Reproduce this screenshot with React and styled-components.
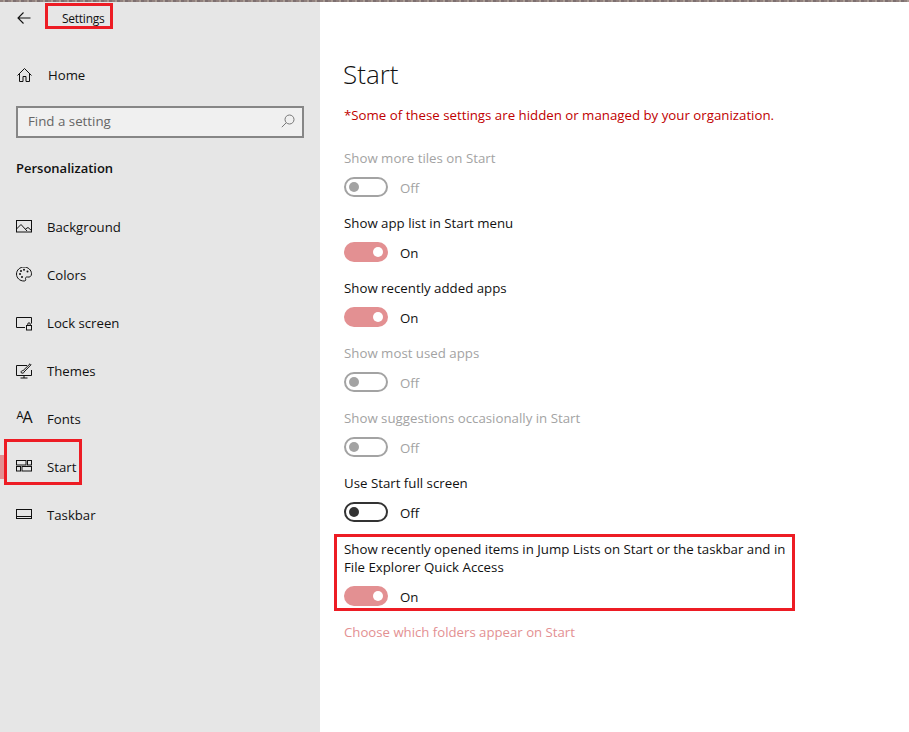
import React from "react";
import styled, { createGlobalStyle } from "styled-components";

const Global = createGlobalStyle`
  html, body { margin: 0; padding: 0; background: #fff; }
  body { font-family: "Open Sans", "Noto Sans", "Liberation Sans", sans-serif; color: #111; }
  * { box-sizing: border-box; }
`;

const Page = styled.div`
  position: relative;
  width: 909px;
  height: 732px;
  overflow: hidden;
  display: flex;
  background: #fff;
`;
const TopStrip = styled.div`
  position: absolute;
  top: 0; left: 0; right: 0;
  height: 2px;
  background: repeating-linear-gradient(90deg, #8f7f7c 0 3px, #a89a92 3px 5px, #7d6f70 5px 8px);
`;
const Sidebar = styled.aside`
  width: 320px;
  flex: none;
  background: #e6e6e6;
  display: flex;
  flex-direction: column;
  padding-top: 7px;
`;
const TitleBar = styled.div`
  display: flex;
  align-items: center;
  height: 22px;
  padding-left: 17px;
`;
const BackIcon = styled.svg`
  width: 14px;
  height: 14px;
  fill: none;
  stroke: #111;
  stroke-width: 1.1;
`;
const AppTitle = styled.div`
  align-self: flex-start;
  margin: -4px 0 0 14px;
  width: 68px;
  height: 26px;
  border: 3px solid #ed1c24;
  padding-left: 14px;
  font-size: 12px;
  line-height: 25px;
  letter-spacing: -0.25px;
  white-space: nowrap;
`;
const NavRow = styled.div`
  position: relative;
  display: flex;
  align-items: center;
  height: 48px;
  padding-left: 16px;
  gap: 15px;
  font-size: 13.2px;
`;
const HomeRow = styled(NavRow)`
  margin-top: 22px;
  gap: 16px;
`;
const NavIcon = styled.svg`
  width: 16px;
  height: 16px;
  flex: none;
  fill: none;
  stroke: #111;
  stroke-width: 1;
`;
const ActiveMark = styled.span`
  position: absolute;
  left: 0;
  top: 12px;
  width: 4px;
  height: 24px;
  background: #e39092;
`;
const Annot = styled.span`
  position: absolute;
  left: 4px;
  top: -4px;
  width: 78px;
  height: 46px;
  border: 3px solid #ed1c24;
`;
const Search = styled.div`
  margin: 7px 16px 0;
  height: 32px;
  border: 2px solid #868686;
  background: #f0f0f0;
  display: flex;
  align-items: center;
  justify-content: space-between;
  padding: 0 7px 2px 10px;
  font-size: 13.3px;
  color: #666;
`;
const SearchIcon = styled.svg`
  width: 14px;
  height: 14px;
  fill: none;
  stroke: #777;
  stroke-width: 1;
`;
const SectionTitle = styled.div`
  margin: 20px 0 25px 16px;
  height: 20px;
  line-height: 20px;
  font-size: 13px;
  font-weight: 600;
`;
const Main = styled.main`
  flex: 1;
  padding: 54px 0 0 24px;
`;
const Heading = styled.h1`
  margin: 0 0 0 -1px;
  font-size: 26px;
  font-weight: 300;
  line-height: 40px;
  color: #111;
`;
const Warning = styled.div`
  margin-top: 11px;
  font-size: 13.28px;
  line-height: 20px;
  color: #c00000;
  height: 43px;
`;
const Setting = styled.div`
  display: flex;
  flex-direction: column;
  height: 65px;
  position: relative;
  color: ${p => (p.$disabled ? "#a3a3a3" : "#111")};
`;
const TallSetting = styled(Setting)`
  height: 84px;
  width: 452px;
  margin-top: 1px;
`;
const Label = styled.div`
  font-size: 13.28px;
  line-height: 18px;
  height: ${p => (p.$lines || 1) * 18}px;
  margin-top: 1px;
  white-space: nowrap;
`;
const ToggleRow = styled.div`
  display: flex;
  align-items: center;
  gap: 12px;
  margin-top: 10px;
  font-size: 13.28px;
  height: 20px;
`;
const ToggleText = styled.span`
  padding-top: 2px;
`;
const Switch = styled.span`
  width: 44px;
  height: 20px;
  border-radius: 10px;
  display: flex;
  align-items: center;
  flex: none;
  justify-content: ${p => (p.$on ? "flex-end" : "flex-start")};
  background: ${p => (p.$on ? "#e39092" : "transparent")};
  border: ${p => (p.$on ? "none" : `2px solid ${p.$disabled ? "#a3a3a3" : "#333"}`)};
  padding: ${p => (p.$on ? "0 5px" : "0 3px")};
`;
const Knob = styled.span`
  width: 10px;
  height: 10px;
  border-radius: 50%;
  background: ${p => (p.$on ? "#fff" : p.$disabled ? "#a3a3a3" : "#333")};
`;
const Box = styled.span`
  position: absolute;
  left: -10px;
  top: -5px;
  width: 461px;
  height: 77px;
  border: 3px solid #ed1c24;
  pointer-events: none;
`;
const FolderLink = styled.div`
  font-size: 13.2px;
  line-height: 20px;
  color: #e39092;
  margin-top: -1px;
`;
const FontsGlyph = styled.span`
  width: 16px;
  flex: none;
  font-size: 16px;
  line-height: 16px;
  letter-spacing: -1px;
  text-align: center;
  margin-top: -2px;
`;
const SmallA = styled.span`
  font-size: 11px;
  position: relative;
  top: -4px;
`;

const icons = {
  home: <path d="M1.500 8.500 8.500 1.500l7 7M3.500 6.500v8h3.500v-5h3v5h3.500v-8" />,
  background: (
    <>
      <rect x="0.500" y="1.500" width="15" height="11.500" />
      <path d="M0.500 10 5 5.500l6 6.500M9.500 10l2.500-1.500 3.500 3" />
    </>
  ),
  colors: (
    <>
      <path d="M8 0c4 0 7.500 3 7.500 6.800 0 2.500-1.800 3.700-3.800 3.200-1.800-.4-2.700 1-2 2.300.4 1-.4 1.700-1.700 1.700C3.700 14 .5 11 .5 7S4 0 8 0Z" />
      <g fill="#111" stroke="none">
        <circle cx="4" cy="7" r="1" /><circle cx="5" cy="4" r="1" /><circle cx="8" cy="2.800" r="1" /><circle cx="11.500" cy="4.500" r="1" /><circle cx="6" cy="10" r="1" />
      </g>
    </>
  ),
  lock: (
    <>
      <path d="M9 12.500H.5v-10h15v6" />
      <rect x="10.500" y="10.500" width="5" height="4.500" />
      <path d="M11.800 10.500V9a1.200 1.200 0 0 1 2.400 0v1.500" />
    </>
  ),
  themes: (
    <>
      <path d="M11 2.500H.5v10h15V7M8 12.500v2.500M4.500 15h7" />
      <path d="M5 9.500c0-1.500 1-2 2-1.800L14 .8l1 1-7 7.200c0 1-1.500 1.800-3 .5Z" />
    </>
  ),
  start: (
    <>
      <rect x="0.500" y="1.500" width="9.500" height="4.500" />
      <rect x="11.500" y="1.500" width="4" height="4.500" />
      <rect x="0.500" y="7.500" width="4" height="4.500" />
      <rect x="6" y="7.500" width="9.500" height="4.500" />
    </>
  ),
  taskbar: (
    <>
      <rect x="0.500" y="2.500" width="15" height="9" />
      <path d="M0.500 9.500h15" />
    </>
  ),
};

const Nav = ({ icon, label, active }) => (
  <NavRow>
    {active && <ActiveMark />}
    {active && <Annot />}
    {icon === "fonts" ? (
      <FontsGlyph><SmallA>A</SmallA>A</FontsGlyph>
    ) : (
      <NavIcon viewBox="0 0 16 16">{icons[icon]}</NavIcon>
    )}
    {label}
  </NavRow>
);

const Toggle = ({ on, disabled }) => (
  <ToggleRow>
    <Switch $on={on} $disabled={disabled}>
      <Knob $on={on} $disabled={disabled} />
    </Switch>
    <ToggleText>{on ? "On" : "Off"}</ToggleText>
  </ToggleRow>
);

const settings = [
  ["Show more tiles on Start", false, true],
  ["Show app list in Start menu", true, false],
  ["Show recently added apps", true, false],
  ["Show most used apps", false, true],
  ["Show suggestions occasionally in Start", false, true],
  ["Use Start full screen", false, false],
];

export default function App() {
  return (
    <Page>
      <Global />
      <TopStrip />
      <Sidebar>
        <TitleBar>
          <BackIcon viewBox="0 0 14 14">
            <path d="M13.500 7H1M6.500 1.500 1 7l5.500 5.500" />
          </BackIcon>
          <AppTitle>Settings</AppTitle>
        </TitleBar>
        <HomeRow>
          <NavIcon viewBox="0 0 16 16">{icons.home}</NavIcon>
          Home
        </HomeRow>
        <Search>
          Find a setting
          <SearchIcon viewBox="0 0 14 14">
            <circle cx="8.500" cy="5.500" r="4.500" />
            <path d="M5.200 8.800.8 13.200" />
          </SearchIcon>
        </Search>
        <SectionTitle>Personalization</SectionTitle>
        <Nav icon="background" label="Background" />
        <Nav icon="colors" label="Colors" />
        <Nav icon="lock" label="Lock screen" />
        <Nav icon="themes" label="Themes" />
        <Nav icon="fonts" label="Fonts" />
        <Nav icon="start" label="Start" active />
        <Nav icon="taskbar" label="Taskbar" />
      </Sidebar>
      <Main>
        <Heading>Start</Heading>
        <Warning>*Some of these settings are hidden or managed by your organization.</Warning>
        {settings.map(([label, on, disabled]) => (
          <Setting key={label} $disabled={disabled}>
            <Label>{label}</Label>
            <Toggle on={on} disabled={disabled} />
          </Setting>
        ))}
        <TallSetting>
          <Box />
          <Label $lines={2}>
            Show recently opened items in Jump Lists on Start or the taskbar and in
            <br />
            File Explorer Quick Access
          </Label>
          <Toggle on />
        </TallSetting>
        <FolderLink>Choose which folders appear on Start</FolderLink>
      </Main>
    </Page>
  );
}
